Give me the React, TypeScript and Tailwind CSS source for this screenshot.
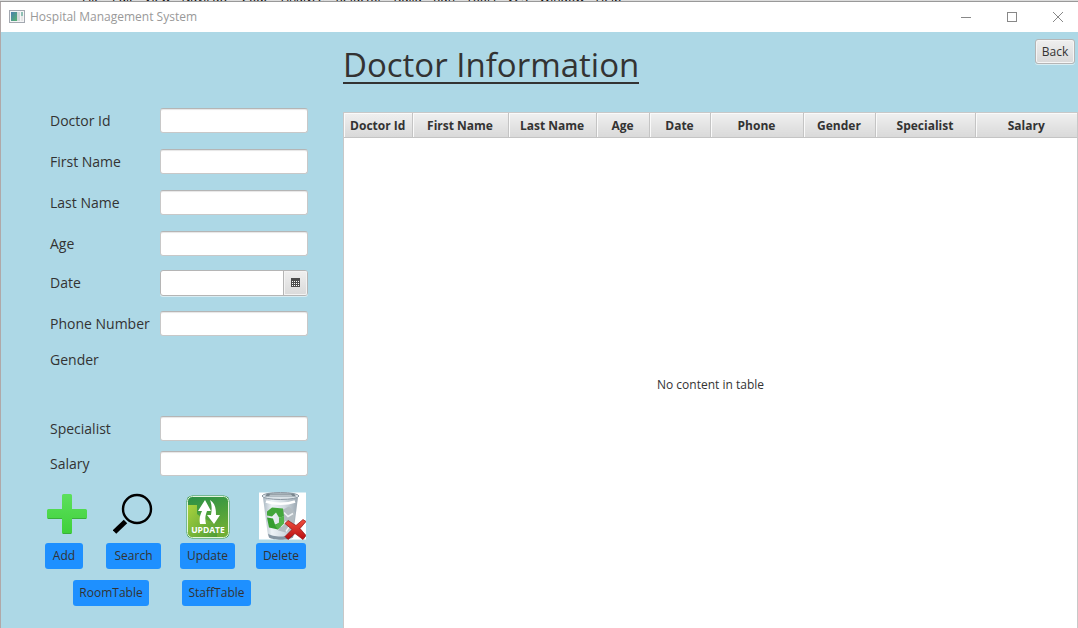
import type { ReactNode } from "react";

const menus = ["File", "Edit", "View", "Navigate", "Code", "Analyze", "Refactor", "Build", "Run", "Tools", "VCS", "Window", "Help"];

const columns = [
  { name: "Doctor Id", width: "w-[68px]" },
  { name: "First Name", width: "w-[96px]" },
  { name: "Last Name", width: "w-[88px]" },
  { name: "Age", width: "w-[53px]" },
  { name: "Date", width: "w-[61px]" },
  { name: "Phone", width: "w-[93px]" },
  { name: "Gender", width: "w-[72px]" },
  { name: "Specialist", width: "w-[100px]" },
  { name: "Salary", width: "w-[102px]" },
];

function WindowIcon() {
  return (
    <svg width="16" height="14" viewBox="0 0 16 14" aria-hidden="true">
      <defs>
        <linearGradient id="pane" x1="0" y1="0" x2="1" y2="1">
          <stop offset="0" stopColor="#4a7fae" />
          <stop offset="1" stopColor="#57b36f" />
        </linearGradient>
      </defs>
      <rect x="0.5" y="0.5" width="15" height="12" fill="#f4f5f6" stroke="#a3a8b0" />
      <rect x="2" y="2" width="6" height="9" fill="url(#pane)" />
      <rect x="8" y="2" width="3" height="9" fill="#d4d9da" />
      <rect x="12" y="2" width="2" height="4" fill="#8fc0b4" />
      <rect x="12" y="6" width="2" height="5" fill="#e6e6e6" />
    </svg>
  );
}

function CalendarIcon() {
  return (
    <svg width="9" height="9" viewBox="0 0 9 9" shapeRendering="crispEdges" aria-hidden="true">
      <rect width="9" height="9" fill="#4d4d4d" />
      {[3, 5, 7].map((y) =>
        [1, 3, 5, 7].map((x) => <rect key={`${x}-${y}`} x={x} y={y} width="1" height="1" fill="#fff" />)
      )}
    </svg>
  );
}

function PlusIcon() {
  return (
    <svg width="40" height="48" viewBox="0 -2 40 48" aria-hidden="true">
      <defs>
        <linearGradient id="plus" x1="0" y1="0" x2="0" y2="1">
          <stop offset="0" stopColor="#5ce05c" />
          <stop offset="1" stopColor="#3fd03a" />
        </linearGradient>
      </defs>
      <path
        d="M16.500 0h7a1.500 1.500 0 0 1 1.500 1.500V15h13.500a1.500 1.500 0 0 1 1.500 1.500v7a1.500 1.500 0 0 1-1.500 1.500H25v13.500a1.500 1.500 0 0 1-1.500 1.500h-7a1.500 1.500 0 0 1-1.500-1.500V25H1.500A1.500 1.500 0 0 1 0 23.500v-7A1.500 1.500 0 0 1 1.500 15H15V1.500A1.500 1.500 0 0 1 16.500 0z"
        fill="url(#plus)"
      />
      <path d="M1 24.500h14M25 24.500h14M16 39.500h8" stroke="#3aae3c" strokeWidth="1" />
    </svg>
  );
}

function SearchIcon() {
  return (
    <svg width="42" height="48" viewBox="1.500 -2 42 48" aria-hidden="true">
      <circle cx="25.500" cy="15" r="14" fill="none" stroke="#000" strokeWidth="2.400" />
      <path d="M3 38L14 27.500" stroke="#000" strokeWidth="5" />
    </svg>
  );
}

function UpdateIcon() {
  return (
    <svg width="44" height="48" viewBox="0 -3 44 48" aria-hidden="true">
      <defs>
        <linearGradient id="tile" x1="0" y1="0" x2="0.3" y2="1">
          <stop offset="0" stopColor="#2a8f47" />
          <stop offset="0.5" stopColor="#4a9f3c" />
          <stop offset="1" stopColor="#6fae35" />
        </linearGradient>
        <linearGradient id="glow" x1="0" y1="0" x2="1" y2="1">
          <stop offset="0" stopColor="#a9d23c" />
          <stop offset="1" stopColor="#4f9d37" />
        </linearGradient>
      </defs>
      <rect x="0.500" y="0.500" width="43" height="43" rx="6" fill="#3d9a45" />
      <rect x="1.500" y="1.500" width="41" height="41" rx="5" fill="url(#tile)" stroke="#e4f4dc" strokeWidth="1" />
      <path d="M2 10h9v9l4 3 16 8v12H7a5 5 0 0 1-5-5z" fill="url(#glow)" />
      <path d="M14 29c-1-5 0-9 2-13h-4L19 5l6 11h-4c-2 5-2 9-1 13z" fill="#fff" />
      <path d="M24 5c5 3 6 8 6 15h4l-6 9-7-9h4c1-6 1-10-1-15z" fill="#fff" />
      <text x="22" y="38" textAnchor="middle" fontFamily="Open Sans, sans-serif" fontWeight="700" fontSize="8.500" fill="#fff">
        UPDATE
      </text>
    </svg>
  );
}

function BinIcon() {
  return (
    <svg width="50" height="48" viewBox="-3 -0.500 50 48" aria-hidden="true">
      <defs>
        <linearGradient id="bin" x1="0" y1="0" x2="1" y2="0">
          <stop offset="0" stopColor="#aab8c2" />
          <stop offset="0.25" stopColor="#eef3f7" />
          <stop offset="0.6" stopColor="#d3dce2" />
          <stop offset="1" stopColor="#9aa7b1" />
        </linearGradient>
        <linearGradient id="cross" x1="0" y1="0" x2="0" y2="1">
          <stop offset="0" stopColor="#f0503f" />
          <stop offset="1" stopColor="#b80d10" />
        </linearGradient>
      </defs>
      <rect width="47" height="47" fill="#fff" />
      <path d="M4 5l5 38c1 4 22 5 25 0l5-38z" fill="url(#bin)" />
      <path d="M9 41c4 4 21 4 26 0l-1 4c-4 3-20 3-24 0z" fill="#8595a2" />
      <ellipse cx="21.500" cy="3.500" rx="18.500" ry="3.500" fill="#dbe3e8" stroke="#8b98a2" />
      <path d="M8 1h27l2 3H6z" fill="#78858d" />
      <path d="M11 2h21l2 2H10z" fill="#b9c3c9" />
      <path d="M7 9c8 3 21 3 29 0" stroke="#fff" strokeWidth="2.500" fill="none" />
      <path d="M24 17l6-3 6 6-2 15-7 5-8-2 5-8z" fill="#b3bcc1" />
      <path d="M25 20l4 4 5-3M22 34l5-5 5 5M27 39l4-6" stroke="#edf1f3" strokeWidth="1.500" fill="none" />
      <path d="M8 19l5-4 11 1 1 8-5 1-3-5-4 4-5-1z" fill="#43a63b" />
      <path d="M8 25l6 1 2 6 3-1v6l-9-2z" fill="#359d30" />
      <path d="M20 25l5-1v7l-6 6-3-4 4-3z" fill="#52b449" />
      <path
        d="M29 28l8 5 7-6 3 2-6 7 6 7-3 4-8-6-7 6-3-3 7-7-7-6z"
        fill="url(#cross)"
        stroke="#8d1113"
        strokeWidth="0.700"
      />
    </svg>
  );
}

const inputBox =
  "h-[25px] w-full rounded-[3px] border border-[#c8c8c8] border-t-[#b5b5b5] bg-white px-2 text-xs shadow-[inset_0_2px_1px_-1px_#e6e6e6] outline-none";

function Field({ id, label, height }: { id: string; label: string; height: string }) {
  return (
    <div className={`flex items-center ${height}`}>
      <label htmlFor={id} className="w-[110px] shrink-0 whitespace-nowrap">
        {label}
      </label>
      <div className="w-[148px]">
        <input id={id} type="text" className={inputBox} />
      </div>
    </div>
  );
}

function BlueButton({ children }: { children: ReactNode }) {
  return (
    <button type="button" className="h-[26px] w-full rounded-[3px] bg-[#1e90ff] text-center text-xs whitespace-nowrap">
      {children}
    </button>
  );
}

function Action({ icon, label, width }: { icon: ReactNode; label: string; width: string }) {
  return (
    <div className={`flex flex-col items-center gap-[3px] ${width}`}>
      <div className="flex h-12 items-center justify-center">{icon}</div>
      <BlueButton>{label}</BlueButton>
    </div>
  );
}

export default function App() {
  return (
    <div className="flex min-h-screen flex-col bg-[#add8e6] font-['Open_Sans',sans-serif] text-[#333333]">
      <div
        aria-hidden="true"
        className="flex h-[2px] items-end gap-[11px] overflow-hidden border-b border-[#999999] bg-[#dcdcdc] pl-[82px] text-xs leading-[6px] text-black"
      >
        {menus.map((menu) => (
          <span key={menu}>{menu}</span>
        ))}
      </div>

      <header className="flex h-[30px] items-center overflow-hidden border-l border-[#b0a8a8] bg-white pl-2">
        <WindowIcon />
        <span className="ml-[5px] text-xs text-[#999999]">Hospital Management System</span>
        <div className="-mr-[3px] ml-auto flex">
          <button type="button" aria-label="Minimize" className="flex h-[30px] w-[46px] items-center justify-center">
            <svg width="10" height="10" viewBox="0 0 10 10"><path d="M0 5.500h10" stroke="#888" /></svg>
          </button>
          <button type="button" aria-label="Maximize" className="flex h-[30px] w-[46px] items-center justify-center">
            <svg width="10" height="10" viewBox="0 0 10 10"><rect x="0.500" y="0.500" width="9" height="9" fill="none" stroke="#888" /></svg>
          </button>
          <button type="button" aria-label="Close" className="flex h-[30px] w-[46px] items-center justify-center">
            <svg width="10" height="10" viewBox="0 0 10 10"><path d="M0 0l10 10M10 0L0 10" stroke="#888" /></svg>
          </button>
        </div>
      </header>

      <main className="flex flex-1 border-l border-[#b0a8a8]">
        <form className="w-[342px] shrink-0 pt-[68px] pl-[49px] text-sm">
          <Field id="doctor-id" label="Doctor Id" height="h-[41px]" />
          <Field id="first-name" label="First Name" height="h-[41px]" />
          <Field id="last-name" label="Last Name" height="h-[41px]" />
          <Field id="age" label="Age" height="h-[41px]" />
          <div className="flex h-[37px] items-center">
            <label htmlFor="date" className="w-[110px] shrink-0">Date</label>
            <div className="flex h-[26px] w-[148px] rounded-[3px] border border-[#b5b5b5] bg-white shadow-[0_1px_0_#d9edf3]">
              <input id="date" type="text" className="min-w-0 flex-1 rounded-l-[3px] px-2 text-xs outline-none" />
              <button
                type="button"
                aria-label="Choose date"
                className="flex w-6 items-center justify-center rounded-r-[2px] border-l border-[#b5b5b5] bg-linear-to-b from-[#efefef] to-[#dadada] shadow-[inset_0_0_0_1px_#f3f3f3]"
              >
                <CalendarIcon />
              </button>
            </div>
          </div>
          <Field id="phone" label="Phone Number" height="h-[45px]" />
          <div className="mb-[37px] flex h-7 items-center">Gender</div>
          <Field id="specialist" label="Specialist" height="h-[35px]" />
          <Field id="salary" label="Salary" height="h-[35px]" />

          <div className="mt-[11px] -ml-[5px] flex">
            <Action icon={<span className="pl-[6px]"><PlusIcon /></span>} label="Add" width="w-[38px]" />
            <div className="w-[23px]" />
            <Action icon={<SearchIcon />} label="Search" width="w-[55px]" />
            <div className="w-[19px]" />
            <Action icon={<UpdateIcon />} label="Update" width="w-[55px]" />
            <div className="w-[21px]" />
            <Action icon={<BinIcon />} label="Delete" width="w-[50px]" />
          </div>
          <div className="mt-[11px] mb-5 ml-[23px] flex gap-[33px]">
            <div className="w-[76px]"><BlueButton>RoomTable</BlueButton></div>
            <div className="w-[69px]"><BlueButton>StaffTable</BlueButton></div>
          </div>
        </form>

        <section className="flex min-w-0 flex-1 flex-col">
          <div className="flex h-20 items-start justify-between pt-[7px] pr-[3px]">
            <h1 className="border-b-2 border-[#333333] pt-[9px] text-[33px] leading-[34px] font-normal whitespace-nowrap">
              Doctor Information
            </h1>
            <button
              type="button"
              className="h-[25px] w-10 rounded-[3px] border border-[#b5b5b5] bg-linear-to-b from-[#efefef] to-[#d9d9d9] text-xs shadow-[inset_0_0_0_1px_#f5f5f5,0_1px_0_#d9edf3]"
            >
              Back
            </button>
          </div>
          <div className="flex flex-1 flex-col border-x border-t border-[#c8c8c8] bg-white">
            <table className="w-full table-fixed border-collapse text-xs">
              <thead>
                <tr>
                  {columns.map((column) => (
                    <th
                      key={column.name}
                      scope="col"
                      className={`${column.width} h-6 border-r border-b border-[#c4c4c4] bg-linear-to-b from-[#f0f0f0] to-[#d9d9d9] p-0 pt-[2px] text-center font-bold whitespace-nowrap shadow-[inset_1px_1px_0_#fafafa] last:border-r-0`}
                    >
                      {column.name}
                    </th>
                  ))}
                </tr>
              </thead>
            </table>
            <div className="flex flex-1 items-center justify-center pt-1 text-xs">No content in table</div>
          </div>
        </section>
      </main>
    </div>
  );
}
